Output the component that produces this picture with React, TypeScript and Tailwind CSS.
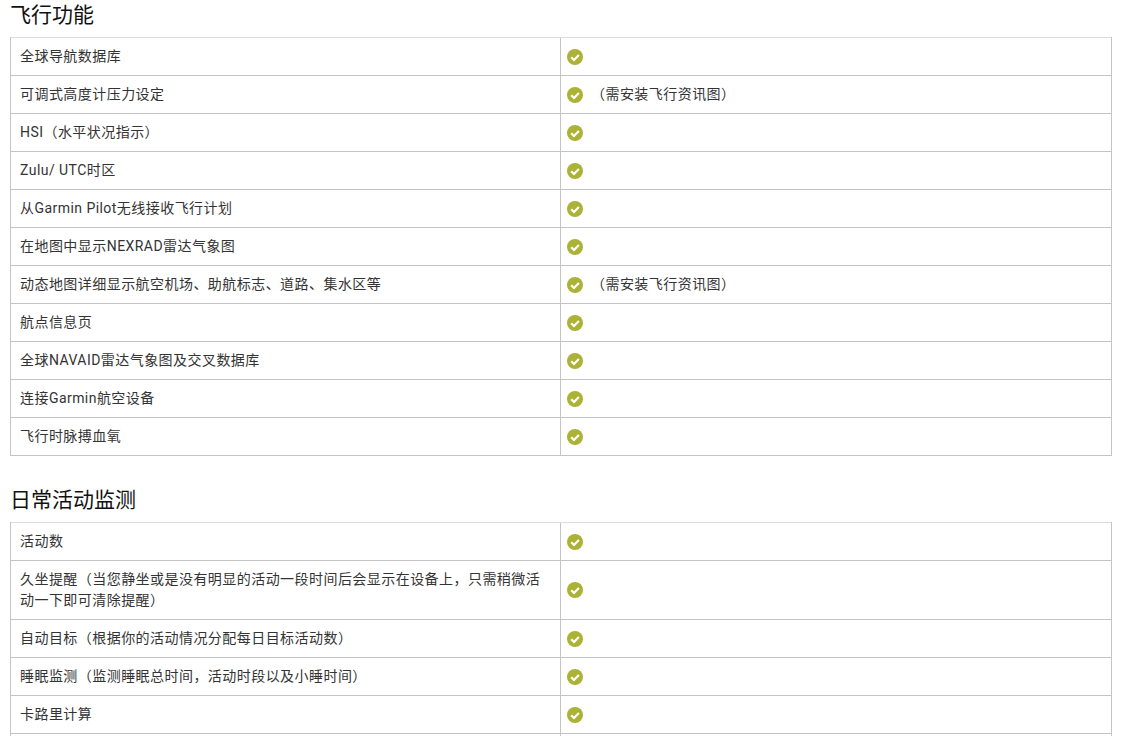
const flight = [
  { name: "全球导航数据库" },
  { name: "可调式高度计压力设定", note: "（需安装飞行资讯图）" },
  { name: "HSI（水平状况指示）" },
  { name: "Zulu/ UTC时区" },
  { name: "从Garmin Pilot无线接收飞行计划" },
  { name: "在地图中显示NEXRAD雷达气象图" },
  { name: "动态地图详细显示航空机场、助航标志、道路、集水区等", note: "（需安装飞行资讯图）" },
  { name: "航点信息页" },
  { name: "全球NAVAID雷达气象图及交叉数据库" },
  { name: "连接Garmin航空设备" },
  { name: "飞行时脉搏血氧" },
];

const activity = [
  { name: "活动数" },
  { name: "久坐提醒（当您静坐或是没有明显的活动一段时间后会显示在设备上，只需稍微活动一下即可清除提醒）" },
  { name: "自动目标（根据你的活动情况分配每日目标活动数）" },
  { name: "睡眠监测（监测睡眠总时间，活动时段以及小睡时间）" },
  { name: "卡路里计算" },
  { name: "" },
];

function Check() {
  return (
    <svg viewBox="0 0 16 16" className="h-4 w-4 shrink-0">
      <circle cx="8" cy="8" r="8" fill="#acb236" />
      <path d="M4.2 8.2 7 11l4.9-5" fill="none" stroke="#fff" strokeWidth="2.2" />
    </svg>
  );
}

function Row({ name, note }: { name: string; note?: string }) {
  return (
    <div className="flex border-t border-[#c4c4c4] first:border-t-[#dddddd]">
      <div className="w-[550px] shrink-0 border-r border-[#c4c4c4] py-2 pl-[9px] pr-2.5 leading-[21px]">{name}</div>
      <div className="flex flex-1 items-center px-1.5 py-2 leading-[21px]">
        <Check />
        {note && <span className="ml-2">{note}</span>}
      </div>
    </div>
  );
}

function Section({ title, rows }: { title: string; rows: { name: string; note?: string }[] }) {
  return (
    <div>
      <h2 className="text-[21px] leading-[31px] tracking-normal text-[#111111]">{title}</h2>
      <div className="mt-1.5 border-x border-b border-[#c4c4c4]">
        {rows.map((r, i) => (
          <Row key={i} name={r.name} note={r.note} />
        ))}
      </div>
    </div>
  );
}

export default function App() {
  return (
    <div className="h-[736px] w-[1125px] overflow-hidden bg-white pl-2.5 pr-[13px] font-['Roboto','Noto_Sans_CJK_SC',sans-serif] text-sm tracking-[0.45px] text-[#333333]">
      <Section title="飞行功能" rows={flight} />
      <div className="h-[29px]" />
      <Section title="日常活动监测" rows={activity} />
    </div>
  );
}
